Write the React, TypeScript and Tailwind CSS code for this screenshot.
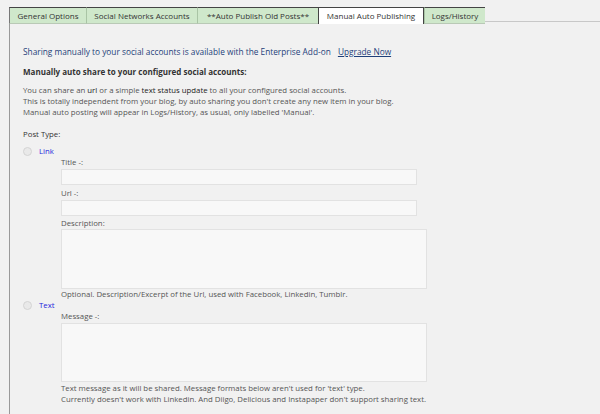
import React from 'react'

const tabs = [
  { label: 'General Options', w: 'w-[77px]' },
  { label: 'Social Networks Accounts', w: 'w-[111px]' },
  { label: '**Auto Publish Old Posts**', w: 'w-[121px]' },
  { label: 'Manual Auto Publishing', w: 'w-[106px]', active: true },
  { label: 'Logs/History', w: 'w-[61px]' },
]

function Radio() {
  return <span className="inline-block w-[9px] h-[9px] rounded-full border border-[#d4d4d4] bg-[#e9e9e9] shrink-0" />
}

export default function App() {
  return (
    <div
      className="w-[600px] h-[414px] bg-[#f1f1f1] overflow-hidden text-[7.8px] text-[#555]"
      style={{ fontFamily: '"Open Sans", "DejaVu Sans", sans-serif' }}
    >
      {/* tab strip */}
      <div className="flex items-end pt-[7px] pl-[9px]">
        {tabs.map((t) => (
          <div
            key={t.label}
            className={`${t.w} h-[17px] flex items-center justify-center border-t border-[#444] text-[8px] text-[#333] whitespace-nowrap ${
              t.active
                ? 'bg-white border-x border-x-[#444]'
                : 'bg-[#cfe8cb] border-b border-b-[#b9c9b6] border-l border-l-[#a9c4a5] first:border-l-[#777] last:border-r last:border-r-[#444]'
            }`}
          >
            {t.label}
          </div>
        ))}
        <div className="flex-1 border-b border-[#c8c8c8] mb-[2px]" />
      </div>

      {/* body */}
      <div className="ml-[9px] border-l border-[#999] h-full pl-[13px] pt-[22px]">
        <p className="text-[#1e3f7a] text-[8.3px] leading-[11px]">
          Sharing manually to your social accounts is available with the Enterprise Add-on{' '}
          <a className="underline ml-[5px] text-[#1e3f7a]">Upgrade Now</a>
        </p>
        <p className="mt-[9px] font-bold text-[8px] text-[#333] leading-[11px]">
          Manually auto share to your configured social accounts:
        </p>
        <div className="mt-[8px] leading-[11px]">
          <p>
            You can share an <span className="text-[#222]">url</span> or a simple{' '}
            <span className="text-[#222]">text status update</span> to all your configured social accounts.
          </p>
          <p>This is totally independent from your blog, by auto sharing you don&apos;t create any new item in your blog.</p>
          <p>Manual auto posting will appear in Logs/History, as usual, only labelled &apos;Manual&apos;.</p>
        </div>
        <p className="mt-[11px] text-[#333] leading-[11px]">Post Type:</p>

        <div className="mt-[6px] flex items-center gap-[7px] leading-[11px]">
          <Radio />
          <span className="text-[#2424dc]">Link</span>
        </div>
        <div className="pl-[38px] leading-[11px]">
          <p>Title -:</p>
          <div className="mt-[1px] w-[356px] h-[16px] bg-[#f8f8f8] border border-[#e2e2e2]" />
          <p className="mt-[3px]">Url -:</p>
          <div className="mt-[1px] w-[356px] h-[16px] bg-[#f8f8f8] border border-[#e2e2e2]" />
          <p className="mt-[2px]">Description:</p>
          <div className="mt-[0px] w-[366px] h-[60px] bg-[#f8f8f8] border border-[#e2e2e2]" />
          <p className="mt-[0px]">Optional. Description/Excerpt of the Url, used with Facebook, Linkedin, Tumblr.</p>
        </div>

        <div className="flex items-center gap-[7px] leading-[11px]">
          <Radio />
          <span className="text-[#2424dc]">Text</span>
        </div>
        <div className="pl-[38px] leading-[11px]">
          <p className="mt-[0px]">Message -:</p>
          <div className="mt-[1px] w-[366px] h-[59px] bg-[#f8f8f8] border border-[#e2e2e2]" />
          <p className="mt-[1px]">Text message as it will be shared. Message formats below aren&apos;t used for &apos;text&apos; type.</p>
          <p>Currently doesn&apos;t work with Linkedin. And Diigo, Delicious and Instapaper don&apos;t support sharing text.</p>
        </div>
      </div>
    </div>
  )
}
